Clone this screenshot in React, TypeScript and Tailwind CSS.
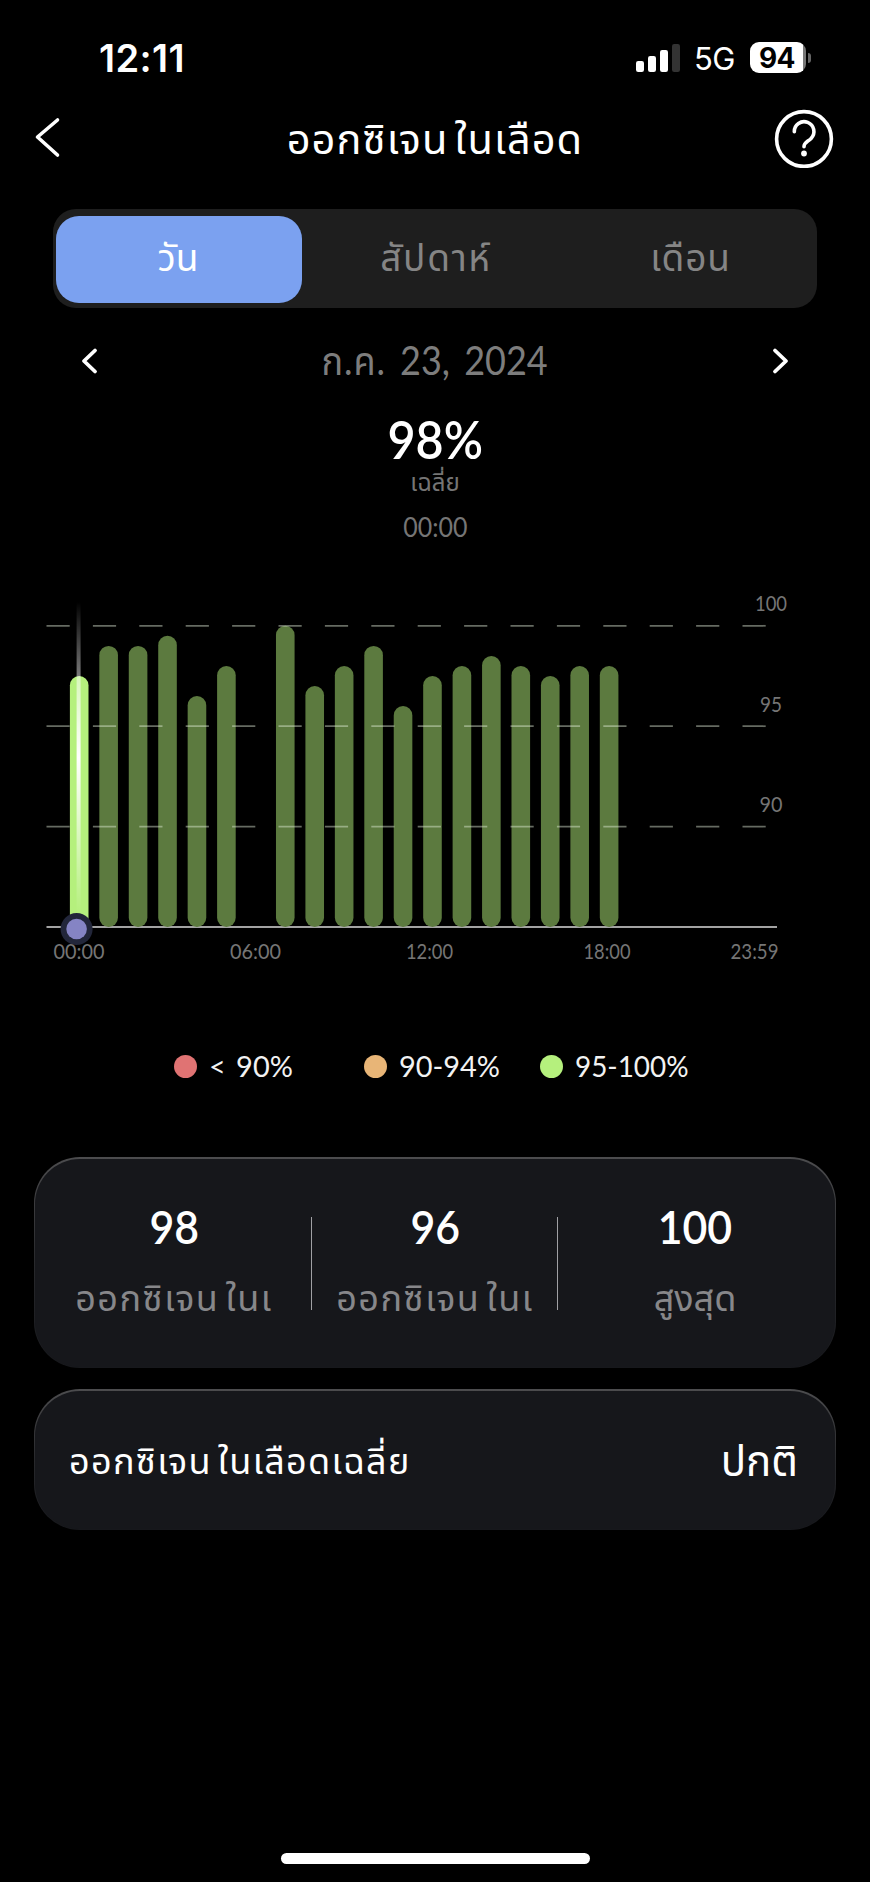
import React from "react";

const bars: [number, number][] = [
  [0, 97.5], [1, 99], [2, 99], [3, 99.5], [4, 96.5], [5, 98], [7, 100], [8, 97], [9, 98], [10, 99],
  [11, 96], [12, 97.5], [13, 98], [14, 98.5], [15, 98], [16, 97.5], [17, 98], [18, 98],
];

const BASE = 347;
const UNIT = 20.08;
const yOf = (v: number) => BASE - (v - 85) * UNIT;

function StatusBar() {
  return (
    <div className="flex h-[96px] items-center justify-between pl-[99px] pr-[59px] font-['Inter',sans-serif]">
      <span className="mt-[20px] text-[38px] leading-none font-semibold tracking-[0.4px]">12:11</span>
      <div className="mt-[19px] flex items-center">
        <svg width="46" height="30" viewBox="0 0 46 30">
          <rect x="1" y="18" width="8" height="11" rx="2.2" fill="#fff" />
          <rect x="13" y="13" width="8" height="16" rx="2.2" fill="#fff" />
          <rect x="25" y="7" width="8" height="22" rx="2.2" fill="#fff" />
          <rect x="37" y="1" width="8" height="28" rx="2.2" fill="#333" />
        </svg>
        <span className="mt-[2px] ml-[13px] w-[42px] text-[31px] leading-none font-normal tracking-[-0.5px]">5G</span>
        <div className="ml-[14px] flex h-[31px] w-[56px] items-center rounded-[9px] bg-[linear-gradient(90deg,#fff_53px,#777_53px)]">
          <span className="w-[54px] pt-px text-center text-[28px] leading-[30px] font-bold tracking-[-0.5px] text-black">94</span>
        </div>
        <span className="ml-[2px] h-[10px] w-[3px] rounded-r-full bg-[#666]" />
      </div>
    </div>
  );
}

function Header() {
  return (
    <div className="flex h-[84px] items-center justify-between pl-[34px] pr-[36px]">
      <svg width="60" height="60" viewBox="0 0 60 60" fill="none" stroke="#fff" strokeWidth="3.6" strokeLinecap="round" strokeLinejoin="round">
        <path d="M23.5 12 3.5 29 23.5 47" />
      </svg>
      <h1 className="ml-[2px] text-[41.5px] leading-[60px] font-normal tracking-[1.1px]">ออกซิเจน<span className="ml-[6px]">ในเลือด</span></h1>
      <svg width="60" height="60" viewBox="0 0 60 60" fill="none" stroke="#fff" strokeWidth="3.6" strokeLinecap="round">
        <circle cx="30" cy="31" r="27.4" />
        <path d="M20.300 23.800a9.800 9.800 0 1 1 16.800 6.600c-3.200 3.400-7.100 3.800-7.100 8.400" />
        <circle cx="30" cy="45.500" r="2.900" fill="#fff" stroke="none" />
      </svg>
    </div>
  );
}

function Tabs() {
  return (
    <div className="mx-[53px] mt-[29px] flex h-[99px] rounded-[23px] bg-[#1e1e1e] pt-[7px] pr-[7px] pb-[5px] pl-[3px] text-[37px] leading-[81px] text-[#858585]">
      <div className="w-[246px] shrink-0 rounded-[23px] bg-[#7ba1f0] pr-[2px] text-center text-white">วัน</div>
      <div className="w-[268px] shrink-0 text-center tracking-[1.7px]">สัปดาห์</div>
      <div className="w-[241px] shrink-0 text-center tracking-[0.8px]">เดือน</div>
    </div>
  );
}

function DateRow() {
  return (
    <div className="mt-[22px] flex h-[62px] items-center justify-between px-[78px]">
      <svg width="24" height="34" viewBox="0 0 24 34" fill="none" stroke="#fff" strokeWidth="3.800" strokeLinecap="round" strokeLinejoin="round">
        <path d="M17 6.500 6 17 17 27.500" />
      </svg>
      <span className="-mt-[2px] scale-x-90 text-[40px] leading-[60px] whitespace-nowrap text-[#7d7d7d] [word-spacing:5.500px]">
        <span className="tracking-[1px]">ก.ค.</span> 23, 2024
      </span>
      <svg width="24" height="34" viewBox="0 0 24 34" fill="none" stroke="#fff" strokeWidth="3.800" strokeLinecap="round" strokeLinejoin="round">
        <path d="M7 6.500 18 17 7 27.500" />
      </svg>
    </div>
  );
}

function Chart() {
  const xs: [string, number, number][] = [["00:00", 79, 51], ["06:00", 255.500, 51], ["12:00", 429.500, 47], ["18:00", 607, 47], ["23:59", 754.500, 48]];
  const ys: [string, number, number][] = [["100", 31, 32], ["95", 131.500, 22], ["90", 232, 23]];
  return (
    <svg className="block" width="870" height="410" viewBox="0 0 870 410">
      <defs>
        <linearGradient id="cursor" x1="0" y1="0" x2="0" y2="1">
          <stop offset="0" stopColor="#fff" stopOpacity="0" />
          <stop offset="0.5" stopColor="#fff" stopOpacity="1" />
          <stop offset="1" stopColor="#fff" stopOpacity="0" />
        </linearGradient>
      </defs>
      <line x1="46.500" x2="777" y1="347" y2="347" stroke="#a3a3a3" strokeWidth="2" />
      {bars.map(([h, v]) => (
        <rect key={h} x={69.900 + h * 29.440} y={yOf(v)} width="18.600" height={BASE - yOf(v)} rx="9.300" fill={h === 0 ? "#b5f07d" : "#5c7a3f"} />
      ))}
      {[100, 95, 90].map((v) => (
        <line key={v} x1="46.500" x2="766" y1={yOf(v)} y2={yOf(v)} stroke="#e2eeda" strokeOpacity="0.450" strokeWidth="1.700" strokeDasharray="23.200 23.200" />
      ))}
      <rect x="76.600" y="22" width="4" height="312" fill="url(#cursor)" />
      <circle cx="76.600" cy="349" r="16" fill="#22263a" />
      <circle cx="76.600" cy="349" r="10.300" fill="#8584c4" />
      <g fill="#757575" fontFamily="Lato, sans-serif" fontSize="20.500" textAnchor="middle">
        {xs.map(([t, x, w]) => (
          <text key={t} x={x} y="379" textLength={w} lengthAdjust="spacingAndGlyphs">{t}</text>
        ))}
        {ys.map(([t, y, w]) => (
          <text key={t} x="771" y={y} textLength={w} lengthAdjust="spacingAndGlyphs">{t}</text>
        ))}
      </g>
    </svg>
  );
}

function Legend() {
  return (
    <div className="mt-[48px] flex h-[56px] items-center pl-[174px] text-[29.5px] leading-none text-[#f2f2f2]">
      <span className="size-[23px] rounded-full bg-[#e07373]" />
      <span className="ml-[12px] w-[155px] origin-left scale-x-[0.98] [word-spacing:3px]">&lt; 90%</span>
      <span className="size-[23px] rounded-full bg-[#e8b577]" />
      <span className="ml-[12px] w-[141px] origin-left scale-x-[0.98]">90-94%</span>
      <span className="size-[23px] rounded-full bg-[#b5f07d]" />
      <span className="ml-[12px] origin-left scale-x-[0.945]">95-100%</span>
    </div>
  );
}

function Card({ className, children }: { className: string; children: React.ReactNode }) {
  return (
    <div className="mx-[34px] rounded-[46px] bg-linear-to-b from-[#4c4c4e] via-[#28292c] to-[#17181c] px-px pt-[2px] pb-px">
      <div className={"flex rounded-[45px] bg-[#16171b] " + className}>{children}</div>
    </div>
  );
}

function Stat({ value, label }: { value: string; label: React.ReactNode }) {
  return (
    <div className="flex w-[196px] flex-col items-center">
      <div className="-mt-px scale-x-[0.91] text-[47px] leading-[60px] font-semibold text-white">{value}</div>
      <div className="mt-[13px] text-[36px] leading-[56px] whitespace-nowrap text-[#87878a]">{label}</div>
    </div>
  );
}

export default function App() {
  const clipped = <span className="tracking-[1.5px]">ออกซิเจน<span className="ml-[6px]">ในเ</span></span>;
  return (
    <div className="h-[1882px] w-[870px] overflow-hidden bg-black font-['Lato','Noto_Sans_Thai',sans-serif] text-white">
      <StatusBar />
      <Header />
      <Tabs />
      <DateRow />
      <div className="flex h-[188px] flex-col items-center pt-[22px]">
        <div className="scale-x-[0.95] text-[51px] leading-[52px] font-semibold">98%</div>
        <div className="text-[24px] leading-[32px] text-[#757575]">เฉลี่ย</div>
        <div className="mt-[14px] scale-x-[0.96] text-[26px] leading-[30px] text-[#757575]">00:00</div>
      </div>
      <Chart />
      <Legend />
      <div className="mt-[63px]">
        <Card className="h-[208px] pt-[38px] pl-[41px]">
          <Stat value="98" label={clipped} />
          <span className="mt-[20px] mr-[25px] ml-[39px] h-[93px] w-px bg-[#a0a0a4]" />
          <Stat value="96" label={clipped} />
          <span className="mt-[20px] mr-[39px] ml-[24px] h-[93px] w-px bg-[#a0a0a4]" />
          <Stat value="100" label="สูงสุด" />
        </Card>
      </div>
      <div className="mt-[21px]">
        <Card className="h-[138px] items-center justify-between pr-[37px] pl-[34px]">
          <span className="text-[36px] leading-[60px] tracking-[1.3px]">ออกซิเจน<span className="ml-[6px]">ในเลือดเฉลี่ย</span></span>
          <span className="text-[42px] leading-[60px]">ปกติ</span>
        </Card>
      </div>
      <div className="mx-auto mt-[323px] h-[11px] w-[309px] rounded-full bg-white" />
    </div>
  );
}
